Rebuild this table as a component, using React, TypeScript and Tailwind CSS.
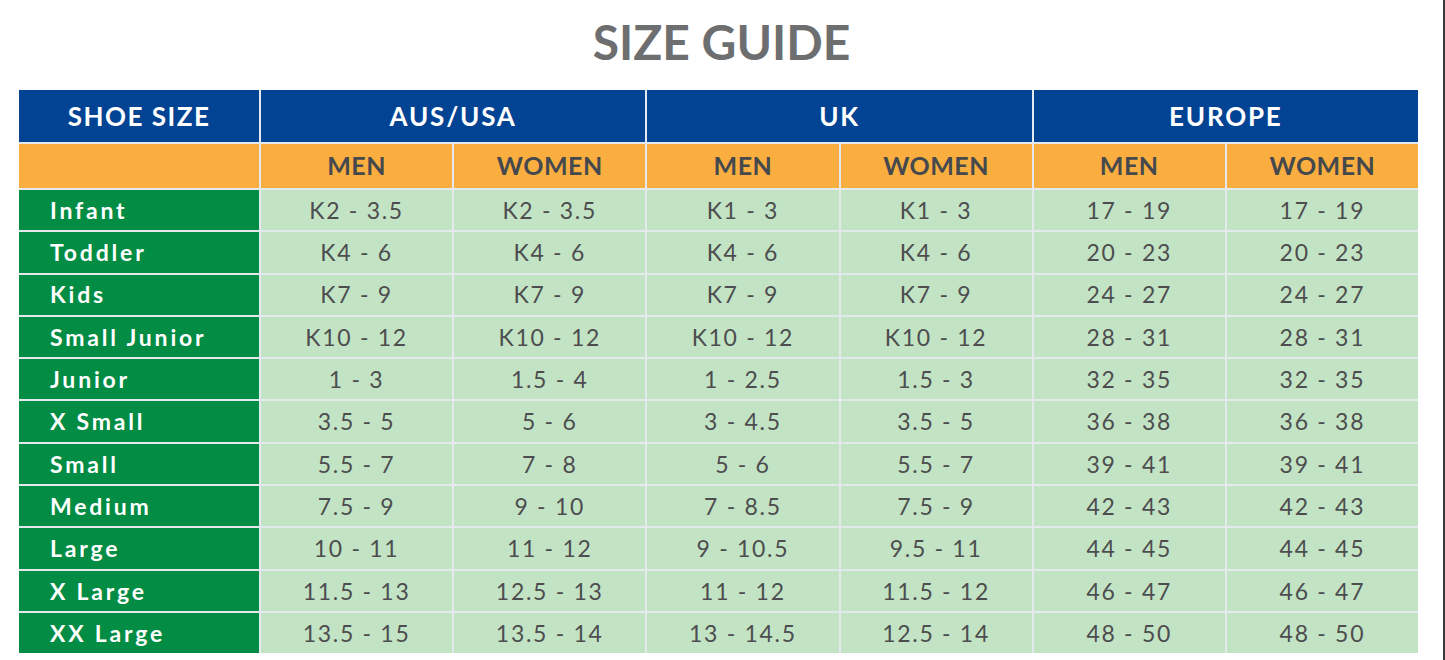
import React from "react";

const subHeads = ["MEN", "WOMEN", "MEN", "WOMEN", "MEN", "WOMEN"];

const rows: [string, string[]][] = [
  ["Infant", ["K2 - 3.5", "K2 - 3.5", "K1 - 3", "K1 - 3", "17 - 19", "17 - 19"]],
  ["Toddler", ["K4 - 6", "K4 - 6", "K4 - 6", "K4 - 6", "20 - 23", "20 - 23"]],
  ["Kids", ["K7 - 9", "K7 - 9", "K7 - 9", "K7 - 9", "24 - 27", "24 - 27"]],
  ["Small Junior", ["K10 - 12", "K10 - 12", "K10 - 12", "K10 - 12", "28 - 31", "28 - 31"]],
  ["Junior", ["1 - 3", "1.5 - 4", "1 - 2.5", "1.5 - 3", "32 - 35", "32 - 35"]],
  ["X Small", ["3.5 - 5", "5 - 6", "3 - 4.5", "3.5 - 5", "36 - 38", "36 - 38"]],
  ["Small", ["5.5 - 7", "7 - 8", "5 - 6", "5.5 - 7", "39 - 41", "39 - 41"]],
  ["Medium", ["7.5 - 9", "9 - 10", "7 - 8.5", "7.5 - 9", "42 - 43", "42 - 43"]],
  ["Large", ["10 - 11", "11 - 12", "9 - 10.5", "9.5 - 11", "44 - 45", "44 - 45"]],
  ["X Large", ["11.5 - 13", "12.5 - 13", "11 - 12", "11.5 - 12", "46 - 47", "46 - 47"]],
  ["XX Large", ["13.5 - 15", "13.5 - 14", "13 - 14.5", "12.5 - 14", "48 - 50", "48 - 50"]],
];

export default function App() {
  return (
    <div
      className="relative w-[1445px] h-[660px] bg-white overflow-hidden border-r-2 border-[#3a3a3a]"
      style={{ fontFamily: "Lato, 'Open Sans', sans-serif" }}
    >
      <div className="h-[90px] flex items-center justify-center pb-[6px]">
        <h1 className="text-[48px] leading-none font-bold text-[#6d6e70] tracking-[0px]">SIZE GUIDE</h1>
      </div>
      <div className="ml-[19px] w-[1399px] grid grid-cols-[240px_repeat(6,1fr)] gap-[2px] bg-[#e4e9ee]">
        <div className="h-[52px] bg-[#034393] flex items-center justify-center text-white font-bold text-[26px] tracking-[1.5px]">
          SHOE SIZE
        </div>
        {["AUS/USA", "UK", "EUROPE"].map((h) => (
          <div
            key={h}
            className="col-span-2 h-[52px] bg-[#034393] flex items-center justify-center text-white font-bold text-[26px] tracking-[1.8px]"
          >
            {h}
          </div>
        ))}
        <div className="h-[44px] bg-[#f9ae3f]" />
        {subHeads.map((s, i) => (
          <div
            key={i}
            className="h-[44px] bg-[#f9ae3f] flex items-center justify-center text-[#45494e] font-bold text-[25px] tracking-[0.5px]"
          >
            {s}
          </div>
        ))}
        {rows.map(([label, vals]) => (
          <React.Fragment key={label}>
            <div className="h-[40.3px] bg-[#028c44] flex items-center pl-[31px] text-white font-bold text-[23px] tracking-[2.8px]">
              {label}
            </div>
            {vals.map((v, i) => (
              <div
                key={i}
                className="h-[40.3px] bg-[#c3e4c4] flex items-center justify-center text-[#4d4d4f] text-[23px] tracking-[1.7px]"
              >
                {v}
              </div>
            ))}
          </React.Fragment>
        ))}
      </div>
    </div>
  );
}
